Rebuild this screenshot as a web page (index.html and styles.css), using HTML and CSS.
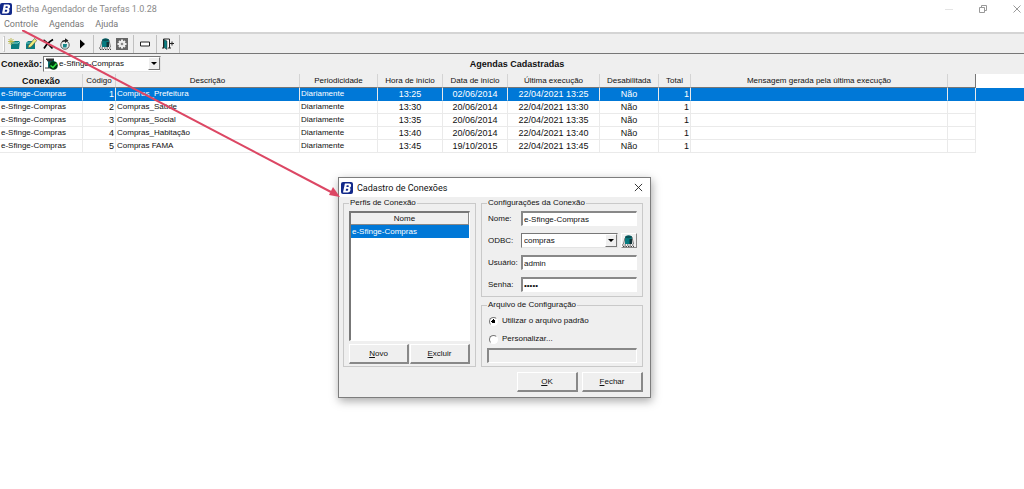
FILE: index.html
```html
<!DOCTYPE html>
<html lang="pt-BR">
<head>
<meta charset="utf-8">
<title>Betha Agendador de Tarefas 1.0.28</title>
<link rel="stylesheet" href="styles.css">
</head>
<body>
<svg class="defs" aria-hidden="true">
  <symbol id="logo" viewBox="0 0 12 12">
    <rect width="12" height="12" rx="2" fill="#12298a"/>
    <path d="M3.900 1.500H8.500Q10.500 1.700 10.100 3.900Q9.800 5.300 8.600 5.800Q9.800 6.400 9.500 8Q9 10.500 6.800 10.500H2ZM5.700 3.300L5.400 5.100H6.900Q7.700 5 7.800 4.200Q7.900 3.400 7.100 3.300ZM5 6.800L4.700 8.700H6.300Q7.100 8.600 7.200 7.700Q7.300 6.900 6.600 6.800Z" fill="#fff" fill-rule="evenodd"/>
  </symbol>
  <symbol id="database" viewBox="0 0 12 12">
    <path d="M3 2.500Q3 .5 6.500 .5Q10 .5 10 2.500V9H3Z" fill="#067b80"/>
    <path d="M3 2.500Q6 4 10 2.500V1.500Q6-.5 3 2Z" fill="#075055"/>
    <path d="M7.500 4H10V9H7.500Z" fill="#103438"/>
    <path d="M3 3L1.500 9M10 2L11.500 9" stroke="#555" stroke-width=".8"/>
    <path d="M0 10H12M1 11.500H12" stroke="#444" stroke-dasharray="1.500 1"/>
  </symbol>
</svg>

<header class="titlebar">
  <svg class="logo"><use href="#logo"/></svg>
  <h1>Betha Agendador de Tarefas 1.0.28</h1>
  <div class="window-controls">
    <button aria-label="Minimizar"><svg viewBox="0 0 10 10"><path d="M1 5.500H9" stroke="#e4e4e4"/></svg></button>
    <button aria-label="Restaurar"><svg viewBox="0 0 10 10"><path d="M1.500 3.500H6.500V8.500H1.500ZM3.500 3V1.500H8.500V6.500H7" fill="none" stroke="#999"/></svg></button>
    <button aria-label="Fechar janela"><svg viewBox="0 0 10 10"><path d="M1.500 1.500L8.500 8.500M8.500 1.500L1.500 8.500" stroke="#999"/></svg></button>
  </div>
</header>

<nav class="menu">
  <button>Controle</button>
  <button>Agendas</button>
  <button>Ajuda</button>
</nav>

<div class="toolbar">
  <span class="grip"></span>
  <button aria-label="Nova agenda"><svg viewBox="0 0 12 12"><path d="M3 5L5 3H12L11 11H3Z" fill="#0b7d80"/><path d="M4 5H10L12 3" stroke="#8bdcda" fill="none"/><path d="M3 0V7M0 3.500H6.500M.6 1L5.500 6M5.500 1L.6 6" stroke="#b8b84a" stroke-width=".9"/></svg></button>
  <button aria-label="Editar agenda"><svg viewBox="0 0 12 12"><path d="M1 5L3 3H10V11H1Z" fill="#0b7d80"/><path d="M1 5H8L10 3" stroke="#6ecac8" fill="none"/><path d="M3.500 7.500L9.500 .5L11.800 2.500L6 9L3 10Z" fill="#eeee7a" stroke="#444" stroke-width=".6"/></svg></button>
  <button aria-label="Excluir agenda"><svg viewBox="0 0 12 12"><path d="M1.500 2Q6 5 10.500 10.500M11 1.500Q5 5 2 10.500" fill="none" stroke="#000" stroke-width="1.700"/></svg></button>
  <button aria-label="Atualizar"><svg viewBox="0 0 12 12"><circle cx="6" cy="7" r="4.200" fill="#e8eeee" stroke="#555"/><path d="M2.500 4Q3 2 6 2V.2L9.500 2.500L6 5V3.500" fill="#222"/><path d="M4 6H8L7.500 9.500H4Z" fill="#16878a"/></svg></button>
  <button aria-label="Executar"><svg viewBox="0 0 12 12"><path d="M4 1.500L9 6L4 10.500Z"/></svg></button>
  <span class="separator"></span>
  <button aria-label="Conexões"><svg><use href="#database"/></svg></button>
  <button aria-label="Configurações"><svg viewBox="0 0 12 12"><path d="M0 0H12V12H0Z" fill="#666"/><circle cx="6" cy="6" r="3.300" fill="#eee"/><path d="M6 1.500V10.500M1.500 6H10.500M3 3L9 9M9 3L3 9" stroke="#eee" stroke-width="2"/><circle cx="6" cy="6" r="1.300" fill="#888"/></svg></button>
  <span class="separator"></span>
  <button aria-label="Minimizar painel"><svg viewBox="0 0 12 12"><path d="M1.500 4H10.500V8H1.500Z" fill="#fff" stroke="#222"/></svg></button>
  <span class="separator"></span>
  <button aria-label="Sair"><svg viewBox="0 0 12 12"><path d="M1.500 10V1H7.500V10" fill="#fff" stroke="#222"/><path d="M2 1.500L5 3V11.500L2 9.500Z" fill="#0b8185" stroke="#222" stroke-width=".5"/><path d="M7 5.500H12M10 3.500V7.500M0 10H2M6 10H9" stroke="#222"/></svg></button>
  <span class="separator"></span>
</div>

<div class="connection">
  <label for="conn">Conexão:</label>
  <div class="combo combo-main">
    <select id="conn"><option>e-Sfinge-Compras</option></select>
    <svg class="combo-icon" viewBox="0 0 13 12"><path d="M1 1H9V10H3V4Z" fill="#086970"/><path d="M1 1H9L7 3H3ZM0 10H6" fill="#333" stroke="#333"/><circle cx="8.500" cy="7.500" r="4.300" fill="#003b12"/><path d="M5.500 7.500L8 9.500L11.500 5.500" fill="none" stroke="#32e442" stroke-width="1.500"/></svg>
    <svg class="combo-arrow" viewBox="0 0 10 10"><path d="M2 3.500H8L5 6.500Z"/></svg>
  </div>
  <h2>Agendas Cadastradas</h2>
</div>

<main>
<table class="schedule">
  <colgroup><col class="w-conn"><col class="w-code"><col class="w-desc"><col class="w-period"><col class="w-hour"><col class="w-date"><col class="w-last"><col class="w-off"><col class="w-total"><col class="w-msg"><col class="w-end"><col></colgroup>
  <thead>
    <tr><th class="sorted">Conexão</th><th>Código</th><th>Descrição</th><th>Periodicidade</th><th>Hora de início</th><th>Data de início</th><th>Última execução</th><th>Desabilitada</th><th>Total</th><th>Mensagem gerada pela última execução</th><th></th><td class="rest"></td></tr>
  </thead>
  <tbody>
    <tr class="selected"><td>e-Sfinge-Compras</td><td class="num">1</td><td>Compras_Prefeitura</td><td>Diariamente</td><td class="mid">13:25</td><td class="mid">02/06/2014</td><td class="mid">22/04/2021 13:25</td><td class="mid">Não</td><td class="num">1</td><td></td><td></td><td class="rest"></td></tr>
    <tr><td>e-Sfinge-Compras</td><td class="num">2</td><td>Compras_Saúde</td><td>Diariamente</td><td class="mid">13:30</td><td class="mid">20/06/2014</td><td class="mid">22/04/2021 13:30</td><td class="mid">Não</td><td class="num">1</td><td></td><td></td><td class="rest"></td></tr>
    <tr><td>e-Sfinge-Compras</td><td class="num">3</td><td>Compras_Social</td><td>Diariamente</td><td class="mid">13:35</td><td class="mid">20/06/2014</td><td class="mid">22/04/2021 13:35</td><td class="mid">Não</td><td class="num">1</td><td></td><td></td><td class="rest"></td></tr>
    <tr><td>e-Sfinge-Compras</td><td class="num">4</td><td>Compras_Habitação</td><td>Diariamente</td><td class="mid">13:40</td><td class="mid">20/06/2014</td><td class="mid">22/04/2021 13:40</td><td class="mid">Não</td><td class="num">1</td><td></td><td></td><td class="rest"></td></tr>
    <tr><td>e-Sfinge-Compras</td><td class="num">5</td><td>Compras FAMA</td><td>Diariamente</td><td class="mid">13:45</td><td class="mid">19/10/2015</td><td class="mid">22/04/2021 13:45</td><td class="mid">Não</td><td class="num">1</td><td></td><td></td><td class="rest"></td></tr>
  </tbody>
</table>
</main>

<section class="dialog" role="dialog" aria-labelledby="dialog-title">
  <header class="dialog-title">
    <svg class="logo"><use href="#logo"/></svg>
    <h2 id="dialog-title">Cadastro de Conexões</h2>
    <button aria-label="Fechar diálogo"><svg viewBox="0 0 10 10"><path d="M1 1L9 9M9 1L1 9" stroke="#222"/></svg></button>
  </header>
  <form class="dialog-body">
    <fieldset class="profiles">
      <legend>Perfis de Conexão</legend>
      <div class="profile-list">
        <table>
          <thead><tr><th>Nome</th></tr></thead>
          <tbody><tr><td>e-Sfinge-Compras</td></tr></tbody>
        </table>
      </div>
      <div class="profile-buttons">
        <button type="button" class="push"><u>N</u>ovo</button>
        <button type="button" class="push"><u>E</u>xcluir</button>
      </div>
    </fieldset>
    <div class="settings">
      <fieldset>
        <legend>Configurações da Conexão</legend>
        <div class="fields">
          <label for="nome">Nome:</label>
          <input id="nome" class="text" type="text" value="e-Sfinge-Compras">
          <label for="odbc">ODBC:</label>
          <div class="odbc">
            <div class="combo">
              <select id="odbc"><option>compras</option></select>
              <svg class="combo-arrow" viewBox="0 0 10 10"><path d="M2 3.500H8L5 6.500Z"/></svg>
            </div>
            <button type="button" class="push" aria-label="Administrar ODBC"><svg><use href="#database"/></svg></button>
          </div>
          <label for="usuario">Usuário:</label>
          <input id="usuario" class="text" type="text" value="admin">
          <label for="senha">Senha:</label>
          <input id="senha" class="text" type="password" value="*****">
        </div>
      </fieldset>
      <fieldset class="file">
        <legend>Arquivo de Configuração</legend>
        <label class="choice"><input type="radio" name="arquivo" checked>Utilizar o arquivo padrão</label>
        <label class="choice"><input type="radio" name="arquivo">Personalizar...</label>
        <input class="text" type="text" aria-label="Arquivo personalizado" disabled>
      </fieldset>
    </div>
    <div class="actions">
      <button type="button" class="push"><u>O</u>K</button>
      <button type="button" class="push"><u>F</u>echar</button>
    </div>
  </form>
</section>

<svg class="pointer" viewBox="0 0 318 168" aria-hidden="true"><path d="M0 0L309 162" stroke="#dc4764" stroke-width="2"/><path d="M318 167L307 165L311 157Z" fill="#dc4764"/></svg>
</body>
</html>
```
FILE: styles.css
```css
* { box-sizing: border-box; }
body {
  margin: 0;
  min-height: 100vh;
  background: #fff;
  color: #111;
  font: 8px/12px "Liberation Sans", Arial, sans-serif;
}
button, input, select { font: inherit; color: inherit; margin: 0; }
h1, h2 { margin: 0; font-weight: normal; }
button { padding: 0; border: 0; background: none; }
svg { display: block; }
.defs { position: absolute; width: 0; height: 0; }
.logo { width: 12px; height: 12px; }

.titlebar { display: flex; align-items: center; gap: 4px; height: 17px; color: #8a8a8a; }
.titlebar h1, .dialog-title h2 { font: 9px/12px Roboto, "Noto Sans", sans-serif; }
.window-controls { display: flex; gap: 24px; margin-left: auto; padding-right: 2px; }
.window-controls svg { width: 10px; height: 10px; }

.menu {
  display: flex;
  gap: 11px;
  height: 16px;
  padding: 0 4px;
  border-bottom: 1px solid #d4d4d4;
  color: #777;
  font: 9px/15px Roboto, "Noto Sans", sans-serif;
}

.toolbar {
  display: flex;
  align-items: center;
  gap: 5px;
  height: 21px;
  padding: 0 3px;
  background: #efefef;
  border-bottom: 1px solid #777;
  border-top: 1px solid #d4d4d4;
}
.toolbar svg { width: 12px; height: 12px; }
.grip { width: 2px; height: 16px; margin-right: -2px; border: 1px solid #c4c4c4; border-left-color: #fff; }
.separator { width: 1px; height: 18px; background: #c0c0c0; }

.connection {
  display: flex;
  align-items: center;
  gap: 1px;
  height: 20px;
  padding-left: 1px;
  background: #efefef;
  font-size: 9px;
}
.connection label { font-weight: bold; }
.connection h2 { flex: 1; padding-right: 152px; text-align: center; font-size: 9px; font-weight: bold; }
.combo { position: relative; }
.combo select {
  appearance: none;
  width: 100%;
  height: 15px;
  padding: 0 2px;
  border: 1px solid #e4e4e4;
  border-top-color: #777;
  border-left-color: #777;
  border-radius: 0;
  background: #fff;
  font-size: 8px;
}
.combo-main { width: 118px; }
.combo-main select { height: 16px; padding-left: 15px; }
.combo-icon { position: absolute; left: 2px; top: 2px; width: 13px; height: 12px; }
.combo-arrow {
  position: absolute;
  right: 1px;
  top: 1px;
  width: 12px;
  height: 13px;
  border: 1px solid #777;
  border-top-color: #fff;
  border-left-color: #fff;
  background: #efefef;
  pointer-events: none;
}

.schedule { width: 100%; table-layout: fixed; border-collapse: separate; border-spacing: 0; }
.w-conn { width: 83px; }
.w-code { width: 33px; }
.w-desc { width: 184px; }
.w-period { width: 78px; }
.w-hour { width: 65px; }
.w-date { width: 65px; }
.w-last { width: 92px; }
.w-off { width: 59px; }
.w-total { width: 32px; }
.w-msg { width: 257px; }
.w-end { width: 28px; }
.schedule th, .schedule td {
  height: 13px;
  padding: 0 1px;
  overflow: hidden;
  white-space: nowrap;
  line-height: 12px;
  border-right: 1px solid #eaeaea;
  border-bottom: 1px solid #eaeaea;
}
.schedule th {
  height: 14px;
  padding: 0;
  background: #efefef;
  border-right-color: #d4d4d4;
  border-bottom: 1px solid #777;
  font-weight: normal;
}
.schedule th:nth-child(11) { border-right-color: #777; }
.schedule th.sorted { font-size: 9px; font-weight: bold; }
.schedule .mid { text-align: center; font-size: 9px; }
.schedule .num { text-align: right; font-size: 9px; }
.schedule td.rest { border-color: transparent; }
.schedule .selected td { background: #0078d7; color: #fff; border-bottom-color: #0078d7; }
.schedule .selected .rest { border-color: #0078d7; }

.dialog {
  position: absolute;
  left: 338px;
  top: 177px;
  width: 313px;
  background: #efefef;
  border: 1px solid #7d7d7d;
  box-shadow: 1px 3px 9px rgba(0, 0, 0, .35);
}
.dialog-title { display: flex; align-items: center; gap: 4px; height: 19px; padding: 0 7px 0 2px; background: #fff; }
.dialog-title button { margin-left: auto; }
.dialog-title button svg { width: 9px; height: 9px; }
.dialog-body { display: grid; grid-template-columns: 133px 1fr; gap: 5px; padding: 1px 7px 5px 4px; }
fieldset { min-width: 0; margin: 0; padding: 0 5px 4px; border: 1px solid #c9c9c9; }
legend { margin: 0; padding: 0 1px; line-height: 10px; }
.profiles { display: flex; flex-direction: column; padding-bottom: 2px; }
.profile-list { height: 130px; margin-top: 3px; border: 1px solid #fff; border-top: 2px solid #777; border-left: 2px solid #777; background: #fff; }
.profile-list table { width: 100%; border-collapse: separate; border-spacing: 0; }
.profile-list th { height: 12px; padding: 0 10px 0 0; background: #efefef; border-bottom: 1px solid #888; border-right: 1px solid #888; font-weight: normal; line-height: 11px; }
.profile-list td { height: 13px; padding: 0 1px; background: #0078d7; color: #fff; line-height: 13px; }
.profile-buttons { display: grid; grid-template-columns: 1fr 1fr; gap: 1px; margin-top: 3px; }
.push {
  height: 20px;
  background: #efefef;
  border: 1px solid #fff;
  border-right: 2px solid #888;
  border-bottom: 2px solid #888;
}

.settings { display: flex; flex-direction: column; gap: 3px; }
.fields { display: grid; grid-template-columns: 33px 1fr; align-items: center; row-gap: 7px; padding: 3px 0 0 1px; }
.text {
  width: 100%;
  min-width: 0;
  height: 15px;
  padding: 0 1px;
  border: 1px solid #fff;
  border-top: 2px solid #888;
  border-left: 2px solid #888;
  border-radius: 0;
  background: #fff;
}
.text:disabled { background: #efefef; }
.odbc { display: grid; grid-template-columns: 1fr 16px; gap: 3px; }
.odbc .push { height: 15px; border-width: 1px; }
.odbc .push svg { width: 12px; height: 12px; }
.file { padding: 2px 5px 3px; }
.choice { display: flex; align-items: center; gap: 4px; height: 18px; padding-left: 2px; }
.choice input {
  appearance: none;
  width: 9px;
  height: 9px;
  border: 1px solid #fff;
  border-top-color: #777;
  border-left-color: #777;
  border-radius: 50%;
  background: #fff;
}
.choice input:checked { background: radial-gradient(circle, #000 0 2px, #fff 2px); }
.actions { grid-column: 1 / -1; display: flex; justify-content: flex-end; gap: 4px; }
.actions .push { width: 61px; }

.pointer { position: absolute; left: 22px; top: 30px; width: 318px; height: 168px; pointer-events: none; }
```
